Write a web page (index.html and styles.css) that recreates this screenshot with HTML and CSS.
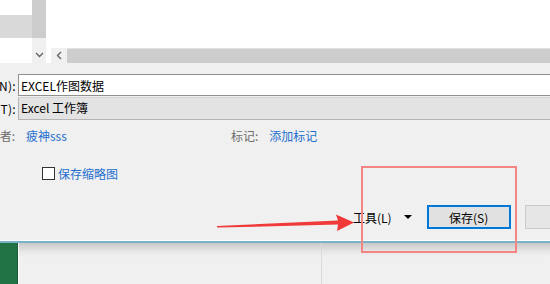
FILE: index.html
```html
<!DOCTYPE html>
<html lang="zh-CN">
<head>
  <meta charset="UTF-8">
  <meta name="viewport" content="width=device-width, initial-scale=1.0">
  <title>另存为</title>
  <link rel="stylesheet" href="styles.css">
</head>
<body>
<div class="screen">
  <div class="dialog">
    <div class="browser">
      <div class="tree"><div class="tree-sel"></div></div>
      <div class="vscroll">
        <div class="vthumb"></div>
        <div class="vtrack">
          <svg width="9" height="6" viewBox="0 0 9 6"><polyline points="1,1 4.5,4.5 8,1" fill="none" stroke="#606060" stroke-width="1.3"/></svg>
        </div>
      </div>
      <div class="files">
        <div class="files-list"></div>
        <div class="hscroll">
          <div class="hbtn">
            <svg width="6" height="9" viewBox="0 0 6 9"><polyline points="5,1 1.5,4.5 5,8" fill="none" stroke="#606060" stroke-width="1.3"/></svg>
          </div>
          <div class="hthumb"></div>
        </div>
      </div>
    </div>

    <div class="fields">
      <div class="field">
        <div class="label"><span>文件名(N):</span></div>
        <input class="name-input" type="text" value="EXCEL作图数据">
      </div>
      <div class="field field-type">
        <div class="label"><span>保存类型(T):</span></div>
        <div class="combo">Excel 工作簿</div>
      </div>
    </div>

    <div class="meta">
      <div class="meta-item meta-author">
        <div class="meta-label"><span>作者:</span></div>
        <a class="link">疲神sss</a>
      </div>
      <div class="meta-item">
        <span class="meta-tag">标记:</span>
        <a class="link">添加标记</a>
      </div>
    </div>

    <label class="thumb-row"><span class="checkbox"></span><span class="link">保存缩略图</span></label>

    <div class="actions">
      <span class="tools">工具(L)</span>
      <span class="caret"></span>
      <button class="btn btn-primary">保存(S)</button>
      <button class="btn">取消</button>
    </div>
  </div>

  <div class="excel">
    <div class="excel-side"></div>
    <div class="excel-body"><div class="excel-col"></div></div>
  </div>

  <div class="highlight"></div>
  <svg class="arrow" width="550" height="284" viewBox="0 0 550 284">
    <polygon points="217,226 338,220.6 336,214.5 354,222.5 337,231 338,224.6 217,227.6" fill="#f03a3a"/>
  </svg>
</div>
</body>
</html>
```

FILE: styles.css
```css
* { box-sizing: border-box; }
body { margin: 0; font-family: "Noto Sans CJK SC", "Noto Sans", sans-serif; font-size: 12px; color: #000; }
.screen { position: relative; width: 550px; height: 284px; overflow: hidden; background: #f0f0f0; }

.dialog { background: #f0f0f0; border-bottom: 1px solid #fff; }

/* file browser */
.browser { display: flex; height: 63px; }
.tree { width: 32px; background: #fff; padding-top: 15px; }
.tree-sel { height: 23px; background: #d9d9d9; }
.vscroll { width: 14px; display: flex; flex-direction: column; }
.vthumb { height: 38px; background: #cdcdcd; }
.vtrack { flex: 1; background: #f0f0f0; display: flex; align-items: center; justify-content: center; padding-top: 9px; }
.files { flex: 1; display: flex; flex-direction: column; background: #fff; }
.files-list { height: 48px; }
.hscroll { flex: 1; display: flex; padding-left: 5px; }
.hbtn { width: 16px; background: #f0f0f0; display: flex; align-items: center; justify-content: center; }
.hthumb { flex: 1; background: #cdcdcd; border-top: 1px solid #e2e2e2; }

/* name + type */
.fields { padding-top: 11px; }
.field { display: flex; height: 22px; align-items: center; }
.field-type { height: 23px; margin-top: 1px; }
.label { width: 18px; overflow: hidden; display: flex; justify-content: flex-end; white-space: nowrap; color: #000; padding-right: 2px; letter-spacing: 0.3px; }
.name-input {
    flex: 1;
    height: 22px;
    margin: 0 -10px 0 0;
    border: 1px solid #8f8f8f;
    padding: 0 2px;
    font: inherit;
    color: #000;
    background: #fff;
    outline: none;
}
.combo {
    flex: 1;
    height: 23px;
    margin-right: -10px;
    background: #e3e3e3;
    border: 1px solid #b4b4b4;
    border-top-color: #d4d4d4;
    padding: 0 2px;
    line-height: 20px;
}

/* author / tags */
.meta { display: flex; margin-top: 8px; line-height: 16px; }
.meta-item { display: flex; }
.meta-author { width: 231px; }
.meta-label { width: 15px; overflow: hidden; display: flex; justify-content: flex-end; white-space: nowrap; color: #6d6d6d; margin-right: 11px; }
.meta-tag { color: #6d6d6d; margin-right: 11px; }
.link { color: #1e6fce; text-decoration: none; }

/* thumbnail */
.thumb-row { display: flex; align-items: center; margin-top: 23px; padding-left: 42px; height: 13px; line-height: 16px; }
.checkbox { width: 13px; height: 13px; border: 1px solid #333; background: #fff; margin-right: 3px; }

/* buttons */
.actions { display: flex; align-items: center; margin-top: 25px; padding-left: 353px; padding-bottom: 11px; white-space: nowrap; }
.tools { color: #000; }
.caret { width: 0; height: 0; border-left: 4px solid transparent; border-right: 4px solid transparent; border-top: 4px solid #000; margin-left: 12px; }
.btn {
    width: 84px;
    height: 24px;
    flex: none;
    font: inherit;
    color: #000;
    background: #e6e6e6;
    border: 1px solid #c9c9c9;
    margin-left: 14px;
    padding: 0;
}
.btn-primary { margin-left: 15px; background: #e1e1e1; border: 2px solid #0078d7; }

/* excel window behind */
.excel { display: flex; height: 43px; border-top: 2px solid #79b3c8; }
.excel-side { width: 19px; background: #217346; border-right: 1px solid #fff; box-shadow: inset -1px 0 0 #1a5b37; }
.excel-body { flex: 1; background: linear-gradient(#c8c8c8, #e8e8e8 9px, #f0f0f0 14px); }
.excel-col { width: 303px; height: 100%; border-right: 1px solid #dadada; }

/* annotations */
.highlight { position: absolute; left: 361px; top: 166px; width: 156px; height: 87px; border: 2px solid #f38585; }
.arrow { position: absolute; left: 0; top: 0; pointer-events: none; }
```
